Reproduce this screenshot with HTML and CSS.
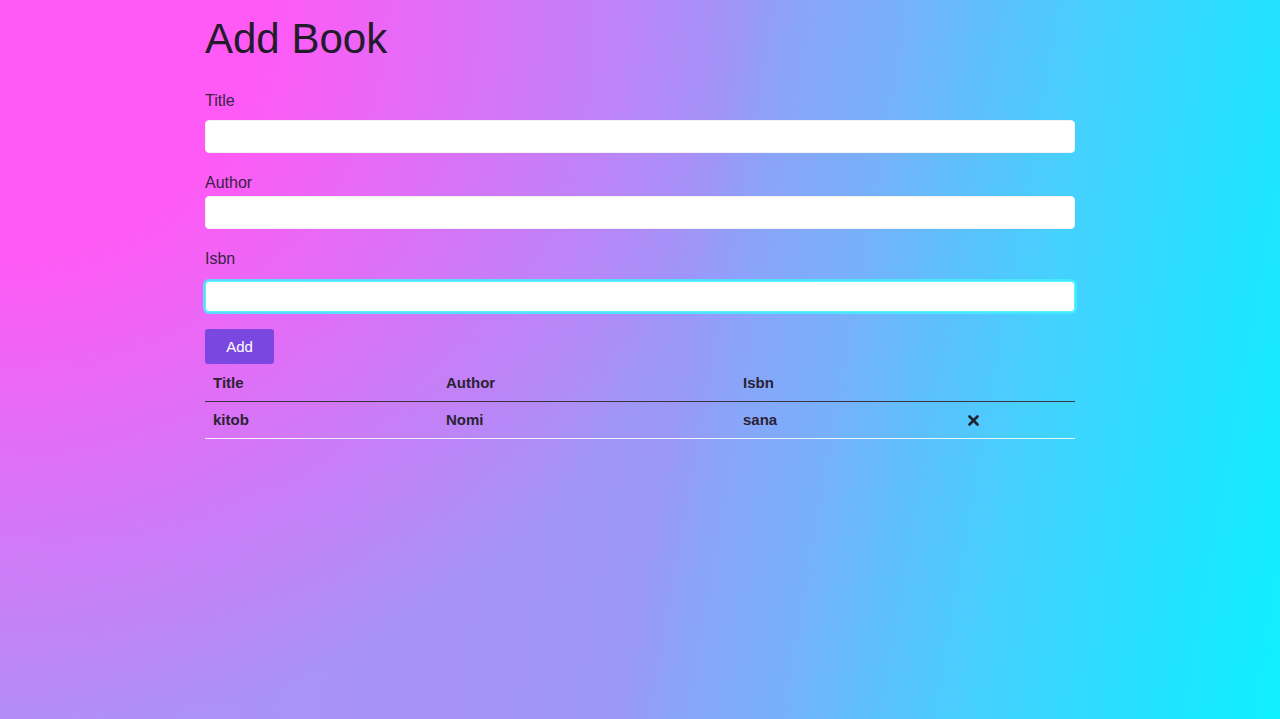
FILE: index.html
```html
<!DOCTYPE html>
<html lang="en">
<head>
<meta charset="utf-8">
<title>Add Book</title>
<link rel="stylesheet" href="styles.css">
</head>
<body>
<main class="container">
  <h1 class="page-title">Add Book</h1>
  <form class="book-form">
    <div class="field field-title">
      <label class="field-label" for="title">Title</label>
      <input class="field-input" id="title" type="text">
    </div>
    <div class="field field-author">
      <label class="field-label" for="author">Author</label>
      <input class="field-input" id="author" type="text">
    </div>
    <div class="field field-isbn">
      <label class="field-label" for="isbn">Isbn</label>
      <input class="field-input is-focused" id="isbn" type="text">
    </div>
    <button class="btn-add" type="button">Add</button>
  </form>
  <table class="book-table">
    <colgroup>
      <col class="col-title">
      <col class="col-author">
      <col class="col-isbn">
      <col class="col-action">
    </colgroup>
    <thead>
      <tr><th>Title</th><th>Author</th><th>Isbn</th><th></th></tr>
    </thead>
    <tbody>
      <tr>
        <td>kitob</td>
        <td>Nomi</td>
        <td>sana</td>
        <td><span class="remove" aria-label="remove"><svg width="11" height="11" viewBox="0 0 11 11"><path d="M1.5 1.5 L9.5 9.5 M9.5 1.5 L1.5 9.5" stroke="#1e2430" stroke-width="2.6" stroke-linecap="round"/></svg></span></td>
      </tr>
    </tbody>
  </table>
</main>
</body>
</html>
```
FILE: styles.css
```css
html {
  min-height: 100%;
  background:
    radial-gradient(ellipse 760px 740px at 0 0,
      rgba(255, 90, 245, 1) 0%, rgba(255, 90, 245, 1) 35%, rgba(255, 90, 245, 0) 100%),
    linear-gradient(100deg, #b48ef8 0%, #a494f8 45%, #9a98f8 53%, #8aa4fa 57%,
      #78b0fa 64%, #5cc0fc 71%, #46d0fe 78%, #22e2ff 91%, #0ef0ff 100%);
  background-attachment: fixed;
}

body {
  margin: 0;
  min-height: 719px;
  font-family: "Liberation Sans", Arial, sans-serif;
  color: #212529;
}

.container {
  width: 870px;
  margin: 0 auto;
}

.page-title {
  margin: 14px 0 25px;
  font-size: 42px;
  line-height: 50px;
  font-weight: 400;
  color: #221b2c;
}

.book-form {
  display: flex;
  flex-direction: column;
  align-items: flex-start;
}

.field {
  width: 100%;
  display: flex;
  flex-direction: column;
}

.field + .field {
  margin-top: 18px;
}

.field-label {
  font-size: 16px;
  line-height: 24px;
  color: #3a2145;
}

.field-input {
  box-sizing: border-box;
  width: 100%;
  height: 33px;
  margin: 7px 0 0;
  padding: 4px 10px;
  border: 1px solid #f2f2f5;
  border-radius: 4px;
  background: #fff;
  font: inherit;
  outline: none;
}

.field-author .field-input {
  margin-top: 1px;
}

.field-isbn .field-input {
  margin-top: 10px;
  height: 31px;
}

.field-input.is-focused {
  border-color: #5cf2ff;
  box-shadow: 0 0 0 2px rgba(70, 236, 255, 0.85);
}

.btn-add {
  margin-top: 17px;
  width: 69px;
  height: 35px;
  border: none;
  border-radius: 3px;
  background: #7b47e1;
  color: #fff;
  font-family: "Liberation Sans", Arial, sans-serif;
  font-size: 15px;
  padding: 0;
}

.book-table {
  width: 870px;
  margin-top: 1px;
  border-collapse: collapse;
  table-layout: fixed;
  font-size: 15px;
  font-weight: 700;
  color: #2a2232;
}

.col-title { width: 233px; }
.col-author { width: 297px; }
.col-isbn { width: 225px; }
.col-action { width: 115px; }

.book-table th,
.book-table td {
  text-align: left;
  padding: 8px 8px;
  line-height: 20px;
}

.book-table thead th {
  border-bottom: 1px solid #3b3346;
}

.book-table tbody td {
  border-bottom: 1px solid rgba(255, 255, 255, 0.85);
}

.remove {
  display: inline-flex;
  vertical-align: middle;
  margin-top: -2px;
}
```
